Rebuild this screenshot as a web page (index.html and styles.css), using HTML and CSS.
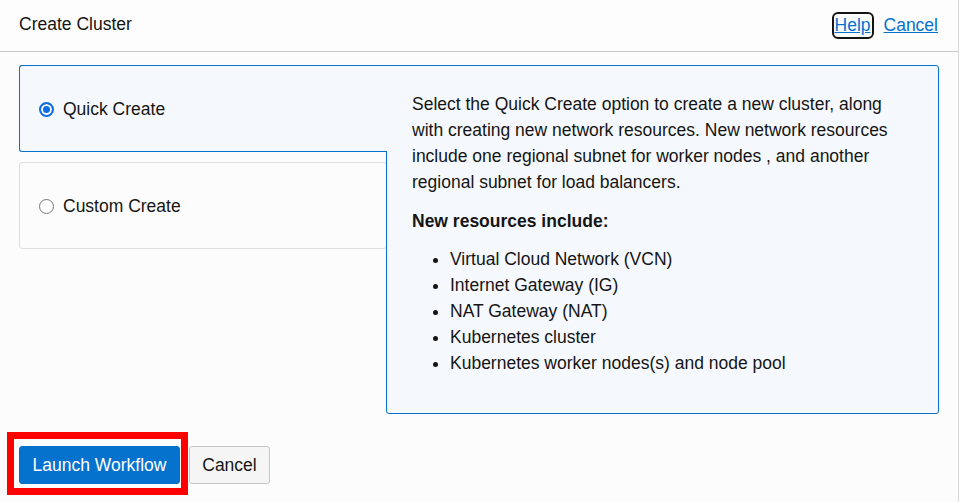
FILE: index.html
```html
<!DOCTYPE html>
<html lang="en">
<head>
<meta charset="utf-8">
<title>Create Cluster</title>
<link rel="stylesheet" href="styles.css">
</head>
<body>
<div class="page">
  <header class="header">
    <div class="title">Create Cluster</div>
    <nav class="links">
      <a href="#" class="link focused">Help</a>
      <a href="#" class="link">Cancel</a>
    </nav>
  </header>
  <main class="main">
    <div class="tiles">
      <div class="tile sel"><span class="radio on"></span><span class="tile-label">Quick Create</span></div>
      <div class="tile"><span class="radio"></span><span class="tile-label">Custom Create</span></div>
    </div>
    <section class="panel">
      <p class="desc">Select the Quick Create option to create a new cluster, along with creating new network resources. New network resources include one regional subnet for worker nodes , and another regional subnet for load balancers.</p>
      <p class="subhead">New resources include:</p>
      <ul class="res">
        <li>Virtual Cloud Network (VCN)</li>
        <li>Internet Gateway (IG)</li>
        <li>NAT Gateway (NAT)</li>
        <li>Kubernetes cluster</li>
        <li>Kubernetes worker nodes(s) and node pool</li>
      </ul>
    </section>
  </main>
  <footer class="footer">
    <button class="btn primary">Launch Workflow</button>
    <button class="btn secondary">Cancel</button>
    <div class="highlight"></div>
  </footer>
</div>
</body>
</html>
```
FILE: styles.css
```css
* { box-sizing: border-box; }
html, body { margin: 0; padding: 0; background: #fff; }
body {
  font-family: "Liberation Sans", Arial, sans-serif;
  font-size: 17.5px;
  color: #161513;
}
.page {
  width: 959px;
  height: 502px;
  background: #fcfcfc;
  border-right: 1px solid #d9d9d9;
}
.header {
  height: 52px;
  display: flex;
  align-items: center;
  justify-content: space-between;
  padding: 0 20px 0 19px;
  border-bottom: 1px solid #c8c8c8;
  background: #fdfdfd;
}
.title { margin-top: -2px; }
.links { display: flex; gap: 13px; }
.link { color: #0572ce; text-decoration: underline; }
.focused {
  outline: 2px solid #161513;
  outline-offset: 1px;
  border-radius: 3px;
}
.main {
  display: flex;
  padding: 13px 0 0 19px;
}
.tiles {
  width: 367px;
  display: flex;
  flex-direction: column;
  gap: 10px;
  align-items: flex-start;
}
.tile {
  width: 368px;
  height: 87px;
  border: 1px solid #dedede;
  border-radius: 3px;
  display: flex;
  align-items: center;
  padding: 2px 0 0 19px;
  background: #fcfcfc;
}
.tile.sel {
  border-color: #0572ce;
  border-right: none;
  border-radius: 3px 0 0 3px;
  background: #f5f9fe;
  position: relative;
  z-index: 1;
}
.radio {
  width: 15px;
  height: 15px;
  border-radius: 50%;
  border: 1px solid #767676;
  background: #fff;
  flex: none;
}
.radio.on {
  border: 2px solid #0b6ee3;
  background: #0b6ee3;
  box-shadow: inset 0 0 0 2px #fff;
}
.tile-label { margin-left: 9px; }
.panel {
  width: 553px;
  height: 349px;
  border: 1px solid #0572ce;
  border-radius: 0 3px 3px 3px;
  background: #f5f9fe;
  padding: 25px 25px 0 25px;
  line-height: 26px;
}
.desc { margin: 0; }
.subhead { margin: 13px 0 0; font-weight: bold; }
.res { margin: 12px 0 0; padding-left: 38px; }
.footer {
  position: relative;
  display: flex;
  gap: 9px;
  padding: 32px 0 0 19px;
}
.btn {
  font-family: "Liberation Sans", Arial, sans-serif;
  font-size: 17.5px;
  height: 38px;
  border-radius: 3px;
  padding: 0;
  cursor: pointer;
}
.primary {
  width: 161px;
  background: #0572ce;
  color: #fff;
  border: 1px solid #0572ce;
}
.secondary {
  width: 81px;
  background: #f5f5f5;
  color: #161513;
  border: 1px solid #c6c6c6;
}
.highlight {
  position: absolute;
  left: 7px;
  top: 18px;
  width: 181px;
  height: 63px;
  border: 7px solid #f00;
  pointer-events: none;
}
```
